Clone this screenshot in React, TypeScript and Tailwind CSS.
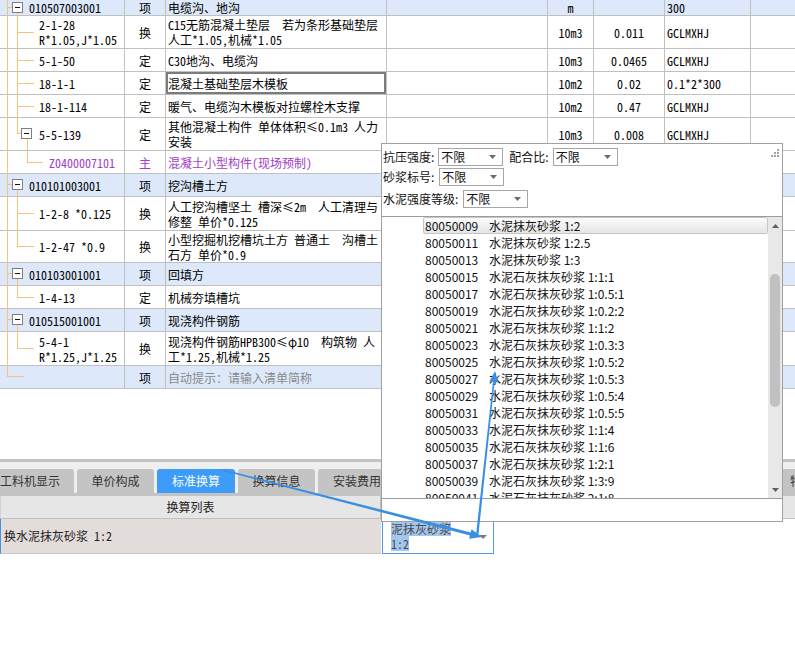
import React from "react";

const MONO = "font-['Noto_Sans_Mono_CJK_SC','Noto_Sans_CJK_SC','DejaVu_Sans_Mono',monospace]";
const SANS = "font-['Noto_Sans_CJK_SC','Noto_Sans',sans-serif]";

type Row = {
  pad: string;
  code: string[];
  type: string;
  name: string[];
  unit?: string;
  qty?: string;
  expr?: string;
  h: string;
  head?: boolean;
  purple?: boolean;
  hint?: boolean;
  active?: boolean;
};

const rows: Row[] = [
  { pad: "pl-[29px]", code: ["010507003001"], type: "项", name: ["电缆沟、地沟"], unit: "m", expr: "300", h: "h-[16px]", head: true },
  { pad: "pl-[39px]", code: ["2-1-28", "R*1.05,J*1.05"], type: "换", name: ["C15无筋混凝土垫层　若为条形基础垫层", "人工*1.05,机械*1.05"], unit: "10m3", qty: "0.011", expr: "GCLMXHJ", h: "h-[33px]" },
  { pad: "pl-[39px]", code: ["5-1-50"], type: "定", name: ["C30地沟、电缆沟"], unit: "10m3", qty: "0.0465", expr: "GCLMXHJ", h: "h-[23px]" },
  { pad: "pl-[39px]", code: ["18-1-1"], type: "定", name: ["混凝土基础垫层木模板"], unit: "10m2", qty: "0.02", expr: "0.1*2*300", h: "h-[23px]", active: true },
  { pad: "pl-[39px]", code: ["18-1-114"], type: "定", name: ["暖气、电缆沟木模板对拉螺栓木支撑"], unit: "10m2", qty: "0.47", expr: "GCLMXHJ", h: "h-[23px]" },
  { pad: "pl-[39px]", code: ["5-5-139"], type: "定", name: ["其他混凝土构件 单体体积≤0.1m3 人力", "安装"], unit: "10m3", qty: "0.008", expr: "GCLMXHJ", h: "h-[33px]" },
  { pad: "pl-[49px]", code: ["Z0400007101"], type: "主", name: ["混凝土小型构件(现场预制)"], h: "h-[23px]", purple: true },
  { pad: "pl-[29px]", code: ["010101003001"], type: "项", name: ["挖沟槽土方"], h: "h-[23px]", head: true },
  { pad: "pl-[39px]", code: ["1-2-8 *0.125"], type: "换", name: ["人工挖沟槽坚土 槽深≤2m　人工清理与", "修整 单价*0.125"], h: "h-[34px]" },
  { pad: "pl-[39px]", code: ["1-2-47 *0.9"], type: "换", name: ["小型挖掘机挖槽坑土方 普通土　沟槽土", "石方 单价*0.9"], h: "h-[32px]" },
  { pad: "pl-[29px]", code: ["010103001001"], type: "项", name: ["回填方"], h: "h-[23px]", head: true },
  { pad: "pl-[39px]", code: ["1-4-13"], type: "定", name: ["机械夯填槽坑"], h: "h-[23px]" },
  { pad: "pl-[29px]", code: ["010515001001"], type: "项", name: ["现浇构件钢筋"], h: "h-[23px]", head: true },
  { pad: "pl-[39px]", code: ["5-4-1", "R*1.25,J*1.25"], type: "换", name: ["现浇构件钢筋HPB300≤φ10　构筑物 人", "工*1.25,机械*1.25"], h: "h-[34px]" },
  { pad: "pl-[29px]", code: [""], type: "项", name: ["自动提示：请输入清单简称"], h: "h-[23px]", head: true, hint: true },
];

const items: [string, string][] = [
  ["80050009", "水泥抹灰砂浆 1:2"],
  ["80050011", "水泥抹灰砂浆 1:2.5"],
  ["80050013", "水泥抹灰砂浆 1:3"],
  ["80050015", "水泥石灰抹灰砂浆 1:1:1"],
  ["80050017", "水泥石灰抹灰砂浆 1:0.5:1"],
  ["80050019", "水泥石灰抹灰砂浆 1:0.2:2"],
  ["80050021", "水泥石灰抹灰砂浆 1:1:2"],
  ["80050023", "水泥石灰抹灰砂浆 1:0.3:3"],
  ["80050025", "水泥石灰抹灰砂浆 1:0.5:2"],
  ["80050027", "水泥石灰抹灰砂浆 1:0.5:3"],
  ["80050029", "水泥石灰抹灰砂浆 1:0.5:4"],
  ["80050031", "水泥石灰抹灰砂浆 1:0.5:5"],
  ["80050033", "水泥石灰抹灰砂浆 1:1:4"],
  ["80050035", "水泥石灰抹灰砂浆 1:1:6"],
  ["80050037", "水泥石灰抹灰砂浆 1:2:1"],
  ["80050039", "水泥石灰抹灰砂浆 1:3:9"],
  ["80050041", "水泥石灰抹灰砂浆 2:1:8"],
];

const tabs = [
  { label: "工料机显示", w: "w-[88px]" },
  { label: "单价构成", w: "w-[77px]" },
  { label: "标准换算", w: "w-[78px]", on: true },
  { label: "换算信息", w: "w-[77px]" },
  { label: "安装费用", w: "w-[78px]" },
  { label: "工程量明细", w: "w-[92px]" },
  { label: "反查图形工程量", w: "w-[118px]" },
  { label: "说明信息", w: "w-[80px]" },
  { label: "组价方案", w: "w-[80px]" },
  { label: "特征及内容", w: "w-[78px]" },
];

// tree connector lines of the first column
const TreeLines = () => {
  const o = "#f6c27d";
  const lines: number[][] = [
    [7.5, 0, 7.5, 377],
    [7, 7.5, 12, 7.5],
    [7, 184.5, 12, 184.5],
    [7, 273.5, 12, 273.5],
    [7, 319.5, 12, 319.5],
    [7, 376.5, 24, 376.5],
    [17.5, 13, 17.5, 134],
    [17, 32.5, 34, 32.5],
    [17, 60.5, 34, 60.5],
    [17, 83.5, 34, 83.5],
    [17, 106.5, 34, 106.5],
    [17, 133.5, 21, 133.5],
    [27.5, 139, 27.5, 162],
    [27, 162.5, 43, 162.5],
    [17.5, 190, 17.5, 247],
    [17, 213.5, 34, 213.5],
    [17, 246.5, 34, 246.5],
    [17.5, 279, 17.5, 297],
    [17, 297.5, 34, 297.5],
    [17.5, 325, 17.5, 349],
    [17, 348.5, 34, 348.5],
  ];
  const boxes = [
    [12, 2],
    [21, 128],
    [12, 179],
    [12, 268],
    [12, 314],
  ];
  return (
    <svg className="pointer-events-none absolute left-0 top-0" width="124" height="389" shapeRendering="crispEdges">
      {lines.map((l, i) => (
        <line key={i} x1={l[0]} y1={l[1]} x2={l[2]} y2={l[3]} stroke={o} strokeWidth="1" />
      ))}
      {boxes.map(([x, y], i) => (
        <g key={i}>
          <rect x={x + 0.5} y={y + 0.5} width="10" height="10" fill="#fff" stroke="#808080" />
          <line x1={x + 3} y1={y + 5.5} x2={x + 8} y2={y + 5.5} stroke="#111" />
        </g>
      ))}
    </svg>
  );
};

const Select = () => (
  <div className="flex h-[18px] w-[65px] items-center border border-[#a6a6a6] bg-white pl-[2px] leading-none">
    <span>不限</span>
    <svg className="ml-auto mr-[6px]" width="7" height="4" viewBox="0 0 7 4">
      <path d="M0 0h7L3.5 4z" fill="#6b6b6b" />
    </svg>
  </div>
);

const Popup = () => (
  <div className={`absolute left-[381px] top-[143px] z-10 h-[379px] w-[402px] border border-[#a0a0a0] bg-white text-[12px] text-[#111] ${SANS}`}>
    <div className="relative h-[68px] pl-[1px]">
      <svg className="absolute right-[3px] top-[1px]" width="9" height="9" viewBox="0 0 9 9">
        <rect x="7" y="0" width="2" height="2" fill="#a3a3a3" />
        <rect x="4" y="3" width="2" height="2" fill="#a3a3a3" />
        <rect x="7" y="3" width="2" height="2" fill="#a3a3a3" />
        <rect x="1" y="6" width="2" height="2" fill="#a3a3a3" />
        <rect x="4" y="6" width="2" height="2" fill="#a3a3a3" />
        <rect x="7" y="6" width="2" height="2" fill="#a3a3a3" />
      </svg>
      <div className="mt-[4px] flex h-[18px] items-center gap-[4px]">
        <span>抗压强度:</span>
        <Select />
        <span className="ml-[2px]">配合比:</span>
        <Select />
      </div>
      <div className="mt-[2px] flex h-[18px] items-center gap-[5px]">
        <span>砂浆标号:</span>
        <Select />
      </div>
      <div className="mt-[4px] flex h-[18px] items-center gap-[5px]">
        <span>水泥强度等级:</span>
        <Select />
      </div>
    </div>
    <div className="flex h-[283px] border-y border-[#9c9c9c]">
      <div className="flex-1 overflow-hidden pl-[41px]">
        {items.map(([code, name], i) => (
          <div
            key={code}
            className={`flex h-[17px] items-center whitespace-nowrap pl-[1px] ${
              i === 0
                ? "rounded-[2px] border border-[#c6c6c6] bg-linear-to-b from-[#fcfcfc] to-[#e5e5e5]"
                : "border border-transparent"
            }`}
          >
            <span className="w-[64px]">{code}</span>
            <span>{name}</span>
          </div>
        ))}
      </div>
      <div className="flex w-[14px] flex-col bg-[#e8e8e8]">
        <div className="flex h-[17px] items-center justify-center">
          <svg width="7" height="4" viewBox="0 0 7 4">
            <path d="M3.5 0L7 4H0z" fill="#606060" />
          </svg>
        </div>
        <div className="mx-auto mt-[40px] h-[133px] w-[10px] rounded-full bg-[#c1c1c1]" />
        <div className="flex-1" />
        <div className="flex h-[17px] items-center justify-center">
          <svg width="7" height="4" viewBox="0 0 7 4">
            <path d="M0 0h7L3.5 4z" fill="#606060" />
          </svg>
        </div>
      </div>
    </div>
  </div>
);

const Arrows = () => (
  <svg className="pointer-events-none absolute left-0 top-0 z-20" width="795" height="650">
    <g fill="#3a8fe3">
      <polygon points="222.8,470.7 223.2,469.3 471.8,532.7 471,535.8" />
      <polygon points="482,537 469.1,538.8 471.6,529.2" />
      <polygon points="478.2,537.1 475.8,536.9 493,381.8 494.6,382" />
      <polygon points="495,371 498.3,382.4 489.3,381.4" />
    </g>
  </svg>
);

export default function App() {
  return (
    <div className={`relative h-[650px] w-[795px] overflow-hidden bg-white text-black ${MONO}`}>
      <div className="relative">
        {rows.map((r, i) => (
          <div
            key={i}
            className={`flex ${r.h} border-b border-[#c0c0c0] text-[12px] leading-[15px] ${r.head ? "bg-[#dde9fb]" : "bg-white"} ${r.purple ? "text-[#a03cc8]" : ""}`}
          >
            <div className={`flex w-[125px] shrink-0 flex-col justify-center whitespace-nowrap border-r border-[#c0c0c0] ${r.pad}`}>
              {r.code.map((c, j) => (
                <span key={j}>{c}</span>
              ))}
            </div>
            <div className="flex w-[41px] shrink-0 items-center justify-center border-r border-[#c0c0c0]">{r.type}</div>
            <div
              className={`flex w-[221px] shrink-0 flex-col justify-center whitespace-nowrap border-r border-[#c0c0c0] pl-[2px] ${
                r.active ? "shadow-[inset_0_0_0_2px_#7b7b7b]" : ""
              } ${r.hint ? `text-[#8a8a8a] ${SANS}` : ""}`}
            >
              {r.name.map((n, j) => (
                <span key={j}>{n}</span>
              ))}
            </div>
            <div className="w-[161px] shrink-0 border-r border-[#c0c0c0]" />
            <div className="flex w-[46px] shrink-0 items-center justify-center border-r border-[#c0c0c0]">{r.unit}</div>
            <div className="flex w-[71px] shrink-0 items-center justify-center border-r border-[#c0c0c0]">{r.qty}</div>
            <div className="flex w-[86px] shrink-0 items-center border-r border-[#c0c0c0] pl-[2px]">{r.expr}</div>
            <div className="flex-1" />
          </div>
        ))}
        <TreeLines />
      </div>

      <div className="h-[70px]" />

      <div className={`text-[12px] ${SANS}`}>
        <div className="h-[3px] bg-[#c3c3c3]" />
        <div className="h-[7px] bg-[#efefef]" />
        <div className="-ml-[14px] flex h-[24px] gap-[3px] whitespace-nowrap bg-[#efefef]">
          {tabs.map((t) => (
            <div
              key={t.label}
              className={`flex shrink-0 items-center justify-center rounded-t-[3px] ${t.w} ${
                t.on ? "bg-[#3d9cf7] text-white" : "bg-[#c4c4c4] text-[#333]"
              }`}
            >
              {t.label}
            </div>
          ))}
        </div>
        <div className="h-[3px] bg-[#c3c3c3]" />
        <div className="flex h-[23px] border-b border-[#c0c0c0] bg-[#e6e6e6] text-[#222]">
          <div className="flex w-[381px] items-center justify-center border-x border-l-[#d2d2d2] border-r-[#c0c0c0]">换算列表</div>
          <div className="flex-1" />
        </div>
        <div className="flex h-[35px]">
          <div className="flex w-[381px] items-center border-b border-l border-b-[#c8c8c8] border-l-[#4a90e2] bg-[#e2dcda] pl-[3px] text-[#222]">
            换水泥抹灰砂浆<span className={`ml-[6px] ${MONO}`}>1:2</span>
          </div>
          <div className="relative ml-[1px] -mt-[1px] flex h-[36px] w-[112px] flex-col border border-[#4d98ea] bg-white pl-[8px] pt-[2px] leading-[15px] text-[#4a4a4a]">
            <span className="self-start bg-[#a3c6ee]">泥抹灰砂浆</span>
            <span className={`self-start bg-[#a3c6ee] ${MONO}`}>1:2</span>
            <svg className="absolute right-[6px] top-[16px]" width="8" height="4" viewBox="0 0 8 4">
              <path d="M0 0h8L4 4z" fill="#7a7a7a" />
            </svg>
          </div>
          <div className="flex-1" />
        </div>
      </div>

      <Popup />
      <Arrows />
    </div>
  );
}
